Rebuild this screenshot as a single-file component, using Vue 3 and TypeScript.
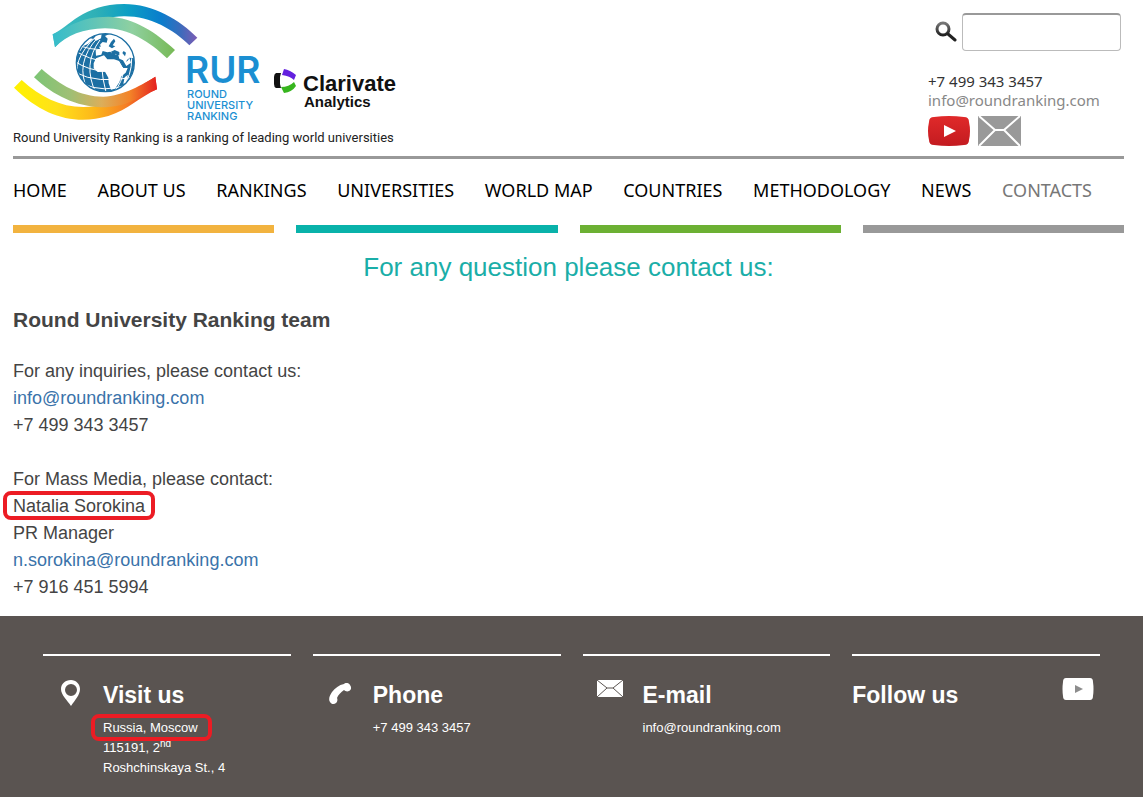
<script setup lang="ts">
import { ref } from 'vue'

interface NavItem {
  label: string
  active?: boolean
}

const navItems: NavItem[] = [
  { label: 'HOME' },
  { label: 'ABOUT US' },
  { label: 'RANKINGS' },
  { label: 'UNIVERSITIES' },
  { label: 'WORLD MAP' },
  { label: 'COUNTRIES' },
  { label: 'METHODOLOGY' },
  { label: 'NEWS' },
  { label: 'CONTACTS', active: true },
]

const bars: string[] = ['orange', 'teal', 'green', 'grey']
const query = ref('')
const phone = '+7 499 343 3457'
const email = 'info@roundranking.com'
</script>

<template>
  <div class="page">
    <header class="header">
      <div class="top">
        <div class="brand">
          <a href="#" class="logo" aria-label="Round University Ranking">
            <svg width="400" height="126" viewBox="0 0 400 126">
              <defs>
                <linearGradient id="topRibbon" x1="0" x2="1" y1="0" y2="0">
                  <stop offset="0" stop-color="#3dbfc4" />
                  <stop offset="0.3" stop-color="#2fb0b6" />
                  <stop offset="0.52" stop-color="#0c9fc4" />
                  <stop offset="0.75" stop-color="#0a7dcc" />
                  <stop offset="0.88" stop-color="#3a6cbc" />
                  <stop offset="1" stop-color="#7d5cb4" />
                </linearGradient>
                <linearGradient id="innerTop" x1="0" x2="1" y1="0" y2="0">
                  <stop offset="0" stop-color="#35bccb" />
                  <stop offset="0.35" stop-color="#63c5b6" />
                  <stop offset="0.65" stop-color="#8fd0a0" />
                  <stop offset="1" stop-color="#77b955" />
                </linearGradient>
                <linearGradient id="bottomRibbon" x1="0" x2="1" y1="0" y2="0">
                  <stop offset="0" stop-color="#fff200" />
                  <stop offset="0.3" stop-color="#ffe11a" />
                  <stop offset="0.55" stop-color="#fdb91a" />
                  <stop offset="0.78" stop-color="#f58025" />
                  <stop offset="1" stop-color="#e8251f" />
                </linearGradient>
                <linearGradient id="innerBottom" x1="0" x2="1" y1="0" y2="0">
                  <stop offset="0" stop-color="#7cc576" />
                  <stop offset="0.3" stop-color="#a0bf74" />
                  <stop offset="0.55" stop-color="#dcae5a" />
                  <stop offset="0.78" stop-color="#f38328" />
                  <stop offset="1" stop-color="#e4201f" />
                </linearGradient>
                <clipPath id="globeClip"><circle cx="316" cy="188" r="87" /></clipPath>
              </defs>
              <g transform="translate(-13 0) scale(0.33333)">
                <path fill="url(#topRibbon)" d="M158 103C205 82 250 12 372 12C460 12 540 60 592 113L568 136C520 88 450 48 372 49C290 52 220 85 165 142Z" />
                <path fill="url(#innerTop)" d="M158 103C205 84 235 50 325 50C400 52 470 98 525 150L501 175C450 125 385 85 315 85C250 86 200 106 165 142Z" />
                <path fill="url(#bottomRibbon)" d="M42 263L65 240C120 290 180 321 250 321C340 320 400 270 466 230L471 268C420 290 385 330 325 348C230 375 135 355 42 263Z" />
                <path fill="url(#innerBottom)" d="M102 232L125 207C180 255 240 290 310 290C370 288 430 252 466 230L471 268C410 292 385 322 305 322C230 320 160 287 102 232Z" />
                <g clip-path="url(#globeClip)">
                  <circle cx="316" cy="188" r="87" fill="#1c6fa3" />
                  <g fill="none" stroke="#fff" stroke-width="3">
                    <path d="M224 152Q270 180 310 182M224 184Q265 212 320 214M228 218Q290 252 400 232M240 138Q270 148 300 149M246 250Q310 282 390 252" />
                    <path d="M290 108Q205 188 244 244M294 112Q222 190 264 272M300 120Q246 192 288 280M305 200Q308 240 318 276M370 210Q368 246 342 276M395 175Q396 225 366 266" />
                  </g>
                  <path fill="#fff" d="M281 190L288 175L312 166L322 178L342 178L360 184L370 204L383 204L377 218L364 229L358 247L345 266L333 269L326 250L325 233L315 215L293 216L281 205Z" />
                  <path fill="#fff" d="M288 167L287 151L300 147L296 137L308 126L320 128L323 116L315 108L335 99L370 109L409 155L405 175L388 173L393 188L379 198L369 181L358 176L354 161L342 166L331 155L322 157L308 153L304 164Z" />
                  <path fill="#fff" d="M232 149L250 122L266 113L280 117L264 132L250 138L241 153ZM290 106L305 102L303 115L289 122L281 116ZM374 232L384 224L378 250L370 251Z" />
                  <path fill="#1c6fa3" d="M333 126L342 116L346 124L338 136L346 139L336 145L326 139ZM333 155L344 150L358 156L358 166L345 161L350 169L339 168ZM371 153L378 158L375 169L367 159ZM294 139L300 130L302 141Z" />
                  <path fill="none" stroke="#1c6fa3" stroke-width="3" d="M357 180L370 202M386 176L380 184" />
                </g>
                <circle cx="316" cy="188" r="87" fill="none" stroke="#1c6fa3" stroke-width="4" />
              </g>
              <g class="rur">
                <text x="172" y="83" font-size="37" font-weight="600">RUR</text>
                <g font-size="11" font-weight="500">
                  <text x="174" y="98">ROUND</text>
                  <text x="174" y="109">UNIVERSITY</text>
                  <text x="174" y="120">RANKING</text>
                </g>
              </g>
              <path fill="#111" d="M268 73L263 73Q261 74 261 77V84Q261 87 263 88H268L267 84V77Z" />
              <path fill="#6320df" d="M271 69Q277 70 283 75L281 80Q277 76 269 75Z" />
              <path fill="#37b51e" d="M268 87Q276 87 281 82L283 86Q279 92 271 93Z" />
              <g class="clarivate">
                <text x="290" y="91" font-size="22">Clarivate</text>
                <text x="291" y="107" font-size="15">Analytics</text>
              </g>
            </svg>
          </a>
          <p class="tagline">Round University Ranking is a ranking of leading world universities</p>
        </div>

        <div class="aside">
          <form class="search" @submit.prevent>
            <button type="submit" aria-label="Search">
              <svg width="22" height="22" viewBox="0 0 22 22">
                <defs>
                  <linearGradient id="lens" x1="0" x2="0" y1="0" y2="1">
                    <stop offset="0" stop-color="#777" />
                    <stop offset="1" stop-color="#222" />
                  </linearGradient>
                </defs>
                <circle cx="8" cy="8" r="6" fill="none" stroke="url(#lens)" stroke-width="3" />
                <path d="M13 13L20 19" stroke="#222" stroke-width="3" stroke-linecap="round" />
              </svg>
            </button>
            <input v-model="query" type="text" aria-label="Search the site" />
          </form>
          <div class="contact">
            <span>{{ phone }}</span>
            <a href="#">{{ email }}</a>
          </div>
          <div class="social">
            <a href="#" aria-label="YouTube">
              <svg width="42" height="30" viewBox="0 0 42 30">
                <defs>
                  <linearGradient id="ytRed" x1="0" x2="0" y1="0" y2="1">
                    <stop offset="0" stop-color="#e02a2a" />
                    <stop offset="1" stop-color="#c31b20" />
                  </linearGradient>
                </defs>
                <path fill="url(#ytRed)" d="M6 1Q21 -1 36 1Q41 1 41 6Q43 15 41 24Q41 29 36 29Q21 31 6 29Q1 29 1 24Q-1 15 1 6Q1 1 6 1Z" />
                <path fill="#fff" d="M16 9V21L28 15Z" />
              </svg>
            </a>
            <a href="#" aria-label="E-mail">
              <svg width="43" height="30" viewBox="0 0 43 30">
                <path fill="#999" d="M0 0H43V30H0Z" />
                <path fill="none" stroke="#fff" stroke-width="2" d="M1 0L17 14H26L42 0M1 30L17 14M42 30L26 14" />
              </svg>
            </a>
          </div>
        </div>
      </div>

      <nav class="nav">
        <a v-for="item in navItems" :key="item.label" href="#" :class="{ active: item.active }">{{ item.label }}</a>
      </nav>
      <div class="bars">
        <span v-for="bar in bars" :key="bar" :class="bar"></span>
      </div>
    </header>

    <main class="content">
      <h1>For any question please contact us:</h1>
      <h2>Round University Ranking team</h2>
      <p>
        For any inquiries, please contact us:<br />
        <a href="#">{{ email }}</a><br />
        {{ phone }}
      </p>
      <p>
        For Mass Media, please contact:<br />
        <span class="marked name">Natalia Sorokina</span><br />
        PR Manager<br />
        <a href="#">n.sorokina@roundranking.com</a><br />
        +7 916 451 5994
      </p>
    </main>

    <footer class="footer">
      <section>
        <div class="icon">
          <svg width="20" height="26" viewBox="0 0 20 26">
            <path fill="#fff" fill-rule="evenodd" d="M10 0C4 0 0 4 0 9C0 15 6 20 10 26C14 20 19 15 19 9C19 4 15 0 10 0ZM10 4A6 6 0 1 1 10 16A6 6 0 1 1 10 4Z" />
          </svg>
        </div>
        <div>
          <h3>Visit us</h3>
          <p><span class="marked place">Russia, Moscow</span><br />115191, 2<sup>nd</sup><br />Roshchinskaya St., 4</p>
        </div>
      </section>
      <section>
        <div class="icon call">
          <svg width="23" height="22" viewBox="0 0 23 22">
            <path fill="#fff" d="M15 1C17 -1 20 0 21 2C23 5 22 7 20 8C18 9 16 8 15 7C12 9 9 12 8 15C9 17 8 19 7 20C5 22 2 21 1 19C-1 16 1 12 3 9C6 5 10 2 15 1Z" />
          </svg>
        </div>
        <div>
          <h3>Phone</h3>
          <p>{{ phone }}</p>
        </div>
      </section>
      <section>
        <div class="icon mail">
          <svg width="26" height="17" viewBox="0 0 26 17">
            <path fill="#fff" d="M0 0H26V17H0Z" />
            <path fill="none" stroke="#5a5451" stroke-width="1" d="M0 0L10 8H16L26 0M0 17L10 8M26 17L16 8" />
          </svg>
        </div>
        <div>
          <h3>E-mail</h3>
          <p><a href="#">{{ email }}</a></p>
        </div>
      </section>
      <section class="follow">
        <h3>Follow us</h3>
        <a href="#" aria-label="YouTube">
          <svg width="32" height="22" viewBox="0 0 32 22">
            <path fill="#fff" d="M4 0Q16 -1 28 0Q31 0 31 4Q32 11 31 18Q31 22 28 22Q16 23 4 22Q1 22 1 18Q0 11 1 4Q1 0 4 0Z" />
            <path fill="#8d8d8d" d="M13 7V15L21 11Z" />
          </svg>
        </a>
      </section>
    </footer>
  </div>
</template>

<style>
body {
  margin: 0;
  background: #fff;
}
</style>

<style scoped>
.page {
  display: flex;
  flex-direction: column;
  min-height: 100vh;
  font-family: "Liberation Sans", Arial, sans-serif;
  color: #444;
}
a {
  text-decoration: none;
  color: inherit;
}
svg {
  display: block;
}
h1, h2, h3, p {
  margin: 0;
}
.header {
  padding: 0 19px 0 13px;
  font-family: "Noto Sans", sans-serif;
}
.top {
  display: flex;
  justify-content: space-between;
  height: 156px;
  border-bottom: 3px solid #999;
}
.logo {
  display: block;
}
.rur {
  fill: #1b8fd2;
  font-family: Inter, sans-serif;
}
.clarivate {
  fill: #111;
  font-family: "Liberation Sans", Arial, sans-serif;
  font-weight: 700;
}
.tagline {
  font-family: Roboto, sans-serif;
  font-size: 13px;
  line-height: 24px;
  color: #222;
}
.aside {
  width: 193px;
  margin-right: 3px;
  padding-top: 13px;
}
.search {
  display: flex;
  align-items: center;
  justify-content: flex-end;
  gap: 5px;
}
.search button {
  padding: 0;
  border: 0;
  background: none;
}
.search input {
  box-sizing: border-box;
  width: 159px;
  height: 38px;
  padding: 0 8px;
  border: 1px solid #bbb;
  border-top: 2px solid #999;
  border-radius: 4px;
  font-size: 16px;
}
.contact {
  display: flex;
  flex-direction: column;
  padding-top: 21px;
  font-size: 15px;
  line-height: 19px;
  color: #333;
}
.contact a {
  color: #888;
}
.social {
  display: flex;
  gap: 8px;
  padding-top: 6px;
}
.nav {
  display: flex;
  justify-content: space-between;
  padding: 17px 32px 21px 0;
  font-size: 18px;
  line-height: 28px;
  color: #000;
}
.nav .active {
  color: #777;
}
.bars {
  display: grid;
  grid-template-columns: repeat(4, 1fr);
  gap: 22px;
}
.bars span {
  height: 8px;
}
.orange {
  background: #f2b33f;
}
.teal {
  background: #09b2aa;
}
.green {
  background: #6cb033;
}
.grey {
  background: #999;
}
.content {
  padding: 19px 19px 15px 13px;
  font-size: 18px;
  line-height: 27px;
}
.content h1 {
  font-size: 26px;
  font-weight: 400;
  line-height: 30px;
  text-align: center;
  color: #1aaea8;
}
.content h2 {
  padding: 25px 0;
  font-size: 21px;
  line-height: 26px;
}
.content p + p {
  padding-top: 27px;
}
.content a {
  color: #3a73aa;
}
.marked {
  position: relative;
}
.marked::after {
  content: "";
  position: absolute;
  box-sizing: border-box;
  border: 4px solid #ec1c24;
  border-radius: 8px;
}
.name::after {
  inset: -5px -10px -4px -10px;
}
.place::after {
  inset: -6px -14px -6px -12px;
}
.footer {
  flex: 1;
  display: grid;
  grid-template-columns: repeat(4, 1fr);
  align-items: start;
  gap: 22px;
  padding: 38px 43px 18px;
  background: #5a5451;
  color: #fff;
}
.footer section {
  display: flex;
  border-top: 2px solid #fff;
  padding-top: 24px;
}
.footer h3 {
  font-size: 23px;
  line-height: 30px;
}
.footer p {
  padding-top: 8px;
  font-size: 13px;
  line-height: 20px;
}
.footer sup {
  font-size: 10px;
  line-height: 0;
}
.icon {
  box-sizing: border-box;
  flex: none;
  width: 60px;
  padding-left: 18px;
}
.call {
  padding: 3px 0 0 16px;
}
.mail {
  padding-left: 14px;
}
.footer .follow {
  justify-content: space-between;
  padding: 22px 6px 0 0;
}
.follow h3 {
  padding-top: 2px;
}
</style>
